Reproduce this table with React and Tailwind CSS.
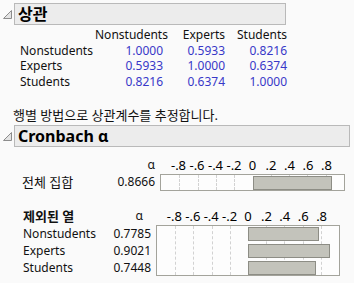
import React from "react";

const FONT = { fontFamily: "'Noto Sans', 'Noto Sans CJK KR', sans-serif" };

const corr = [
  { name: "Nonstudents", vals: ["1.0000", "0.5933", "0.8216"] },
  { name: "Experts", vals: ["0.5933", "1.0000", "0.6374"] },
  { name: "Students", vals: ["0.8216", "0.6374", "1.0000"] },
];

const dropped = [
  { name: "Nonstudents", alpha: 0.7785 },
  { name: "Experts", alpha: 0.9021 },
  { name: "Students", alpha: 0.7448 },
];

const ticks = [-0.8, -0.6, -0.4, -0.2, 0, 0.2, 0.4, 0.6, 0.8];
const tickLabel = (t) => (t === 0 ? "0" : (t < 0 ? "-" : "") + String(Math.abs(t)).slice(1));
const pct = (t) => `${((t + 1) / 2) * 100}%`;

const Disclosure = () => (
  <div className="w-[14px] flex items-center justify-center">
    <svg width="9" height="9" viewBox="0 0 9 9">
      <polygon points="8.5,0.5 8.5,8.5 0.5,8.5" fill="#e4e4e4" stroke="#8c8c8c" strokeWidth="1" />
    </svg>
  </div>
);

const Header = ({ children, width }) => (
  <div className="flex items-center">
    <Disclosure />
    <div
      className={`h-[22px] ${width} border border-[#b9b9b9] bg-[#ececec] pl-[3px] flex items-center text-[16px] font-bold text-black`}
    >
      {children}
    </div>
  </div>
);

// tick labels above the chart
const Axis = ({ width }) => (
  <div className={`relative h-[16px] ${width}`}>
    {ticks.map((t) => (
      <span
        key={t}
        className="absolute top-0 -translate-x-1/2 leading-[16px] text-[13px] text-black"
        style={{ left: pct(t) }}
      >
        {tickLabel(t)}
      </span>
    ))}
  </div>
);

// bar chart box, -1..1 scale
const Bars = ({ values, width, rowH }) => (
  <div
    className={`relative ${width} border border-[#a3a39b] bg-[#fdfdfd]`}
    style={{ height: values.length * rowH }}
  >
    {ticks
      .filter((t) => t !== 0)
      .map((t) => (
        <div
          key={t}
          className="absolute top-0 bottom-0 border-l border-dashed border-[#d2d2d2]"
          style={{ left: pct(t) }}
        />
      ))}
    {values.map((v, i) => (
      <div
        key={i}
        className="absolute h-[14px] bg-[#c3c3bb] border border-[#8d8d85]"
        style={{ left: "50%", width: `${v * 50}%`, top: i * rowH + 1 }}
      />
    ))}
  </div>
);

export default function App() {
  return (
    <div className="w-[354px] h-[283px] overflow-hidden bg-[#fafafa] text-[12px] text-[#111]" style={FONT}>
      <div className="pt-[3px]">
        <Header width="w-[272px]">상관</Header>
      </div>

      {/* correlation table */}
      <div className="mt-[2px] pl-[20px] leading-[15.5px]">
        <div className="flex">
          <div className="w-[75px]" />
          <div className="w-[68px] text-right">Nonstudents</div>
          <div className="w-[62px] text-right">Experts</div>
          <div className="w-[62px] text-right">Students</div>
        </div>
        {corr.map((r) => (
          <div key={r.name} className="flex">
            <div className="w-[75px]">{r.name}</div>
            {r.vals.map((v, i) => (
              <div key={i} className={`${i === 0 ? "w-[68px]" : "w-[62px]"} text-right text-[#3838c8]`}>
                {v}
              </div>
            ))}
          </div>
        ))}
      </div>

      <div className="mt-[18px] pl-[13px] leading-[16px] text-[13px]">행별 방법으로 상관계수를 추정합니다.</div>

      <div className="mt-[2px]">
        <Header width="w-[336px]">Cronbach α</Header>
      </div>

      {/* whole set */}
      <div className="mt-[10px] pl-[22px]">
        <div className="flex">
          <div className="w-[93px]" />
          <div className="w-[40px] text-right leading-[16px]">α</div>
          <div className="w-[5px]" />
          <Axis width="w-[185px]" />
        </div>
        <div className="flex items-center">
          <div className="w-[93px] leading-[17px] text-[13px]">전체 집합</div>
          <div className="w-[40px] text-right">0.8666</div>
          <div className="w-[5px]" />
          <Bars values={[0.8666]} width="w-[185px]" rowH={17} />
        </div>
      </div>

      {/* dropped columns */}
      <div className="mt-[17px] pl-[23px]">
        <div className="flex">
          <div className="w-[88px] font-bold leading-[16px] text-[13px]">제외된 열</div>
          <div className="w-[40px] text-right pr-[8px] leading-[16px]">α</div>
          <div className="w-[5px]" />
          <Axis width="w-[184px]" />
        </div>
        <div className="mt-[1px] flex">
          <div className="flex flex-col">
            {dropped.map((d) => (
              <div key={d.name} className="flex h-[17px] items-center">
                <div className="w-[88px]">{d.name}</div>
                <div className="w-[40px] text-right">{d.alpha.toFixed(4)}</div>
              </div>
            ))}
          </div>
          <div className="w-[5px]" />
          <Bars values={dropped.map((d) => d.alpha)} width="w-[184px]" rowH={17} />
        </div>
      </div>
    </div>
  );
}
